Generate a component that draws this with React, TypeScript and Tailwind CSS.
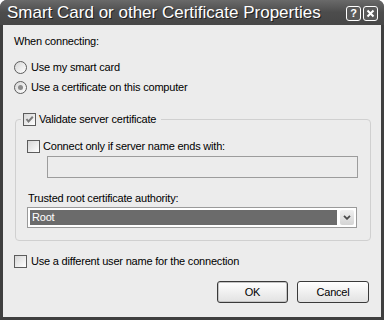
import React from "react";

const font = "font-['Liberation_Sans',Arial,sans-serif]";

const Check = ({ checked }: { checked?: boolean }) => (
  <span className="flex h-[13px] w-[13px] shrink-0 items-center justify-center border border-[#5c5c5c] bg-linear-to-br from-[#d6d6d6] to-white">
    {checked && (
      <svg width="9" height="9" viewBox="0 0 9 9">
        <path d="M1.5 4 L3.5 6.5 L7.8 1.8" stroke="#7b7b7b" strokeWidth="2" fill="none" />
      </svg>
    )}
  </span>
);

const Radio = ({ checked }: { checked?: boolean }) => (
  <span className="flex h-[13px] w-[13px] shrink-0 items-center justify-center rounded-full border border-[#5c5c5c] bg-linear-to-br from-[#d6d6d6] to-white">
    {checked && <span className="h-[5px] w-[5px] rounded-full bg-[#8c8c8c]" />}
  </span>
);

const Row = ({ control, label, gap = "gap-[4px]" }: { control: React.ReactNode; label: string; gap?: string }) => (
  <div className={`flex h-[13px] items-center ${gap}`}>
    {control}
    <span className="leading-[13px]">{label}</span>
  </div>
);

export default function App() {
  return (
    <div className={`${font} flex h-[320px] w-[384px] flex-col overflow-hidden rounded-t-[7px] bg-[#3f3f3f] text-[11px] tracking-[-0.2px] text-black`}>
      {/* title bar */}
      <div className="flex h-[25px] shrink-0 items-center bg-linear-to-b from-[#6a6a6a] via-[#4c4c4c] to-[#474747] pl-[7px] pr-[6px]">
        <span className="flex-1 pt-[1px] text-[17px] leading-[20px] tracking-normal text-white [text-shadow:1px_1px_0_#1e1e1e]">
          Smart Card or other Certificate Properties
        </span>
        <div className="flex gap-[2px] pt-[1px]">
          <span className="flex h-[15px] w-[15px] items-center justify-center rounded-[3px] border border-white bg-[#5a5a5a] text-[11px] leading-none font-bold text-white">
            ?
          </span>
          <span className="flex h-[15px] w-[15px] items-center justify-center rounded-[3px] border border-white bg-[#5a5a5a]">
            <svg width="9" height="9" viewBox="0 0 9 9">
              <path d="M1.5 1.5 L7.5 7.5 M7.5 1.5 L1.5 7.5" stroke="white" strokeWidth="2" />
            </svg>
          </span>
        </div>
      </div>

      {/* client area */}
      <div className="mx-[3px] mb-[3px] flex flex-1 flex-col bg-[#ececec] px-[11px]">
        <div className="mt-[10px] leading-[13px]">When connecting:</div>

        <div className="mt-[13px] flex flex-col gap-[7px]">
          <Row control={<Radio />} label="Use my smart card" />
          <Row control={<Radio checked />} label="Use a certificate on this computer" />
        </div>

        <fieldset className="mt-[19px] ml-[1px] w-[356px] rounded-[4px] border border-[#d0d0d0] pb-[12px]">
          <legend className="ml-[5px] px-[2px] pr-[5px]">
            <Row control={<Check checked />} label="Validate server certificate" gap="gap-[3px]" />
          </legend>
          <div className="mt-[14px] ml-[11px]">
            <Row control={<Check />} label="Connect only if server name ends with:" gap="gap-[3px]" />
          </div>
          <div className="mt-[3px] ml-[31px] h-[22px] w-[311px] border border-[#9c9c9c]" />
          <div className="mt-[14px] ml-[12px] leading-[13px]">Trusted root certificate authority:</div>
          <div className="mt-[2px] ml-[11px] flex h-[21px] w-[330px] border border-[#9a9a9a] bg-white p-[2px]">
            <div className="flex flex-1 items-center bg-[#6b6b6b] pl-[2px] text-white">Root</div>
            <div className="ml-[3px] flex w-[14px] items-center justify-center rounded-[2px] bg-linear-to-b from-[#f0f0f0] to-[#d4d4d4]">
              <svg width="8" height="5" viewBox="0 0 8 5">
                <path d="M1 0.8 L4 3.8 L7 0.8" stroke="#4a4a4a" strokeWidth="1.8" fill="none" />
              </svg>
            </div>
          </div>
        </fieldset>

        <div className="mt-[14px]">
          <Row control={<Check />} label="Use a different user name for the connection" />
        </div>

        <div className="mt-[13px] mr-[1px] flex justify-end gap-[9px]">
          <button className="h-[22px] w-[71px] rounded-[3px] border border-[#3a3a3a] bg-linear-to-b from-white to-[#e2e2e2] shadow-[inset_0_0_0_1px_#c4c4c4]">
            OK
          </button>
          <button className="h-[22px] w-[72px] rounded-[3px] border border-[#3a3a3a] bg-linear-to-b from-white to-[#e2e2e2]">
            Cancel
          </button>
        </div>
      </div>
    </div>
  );
}
